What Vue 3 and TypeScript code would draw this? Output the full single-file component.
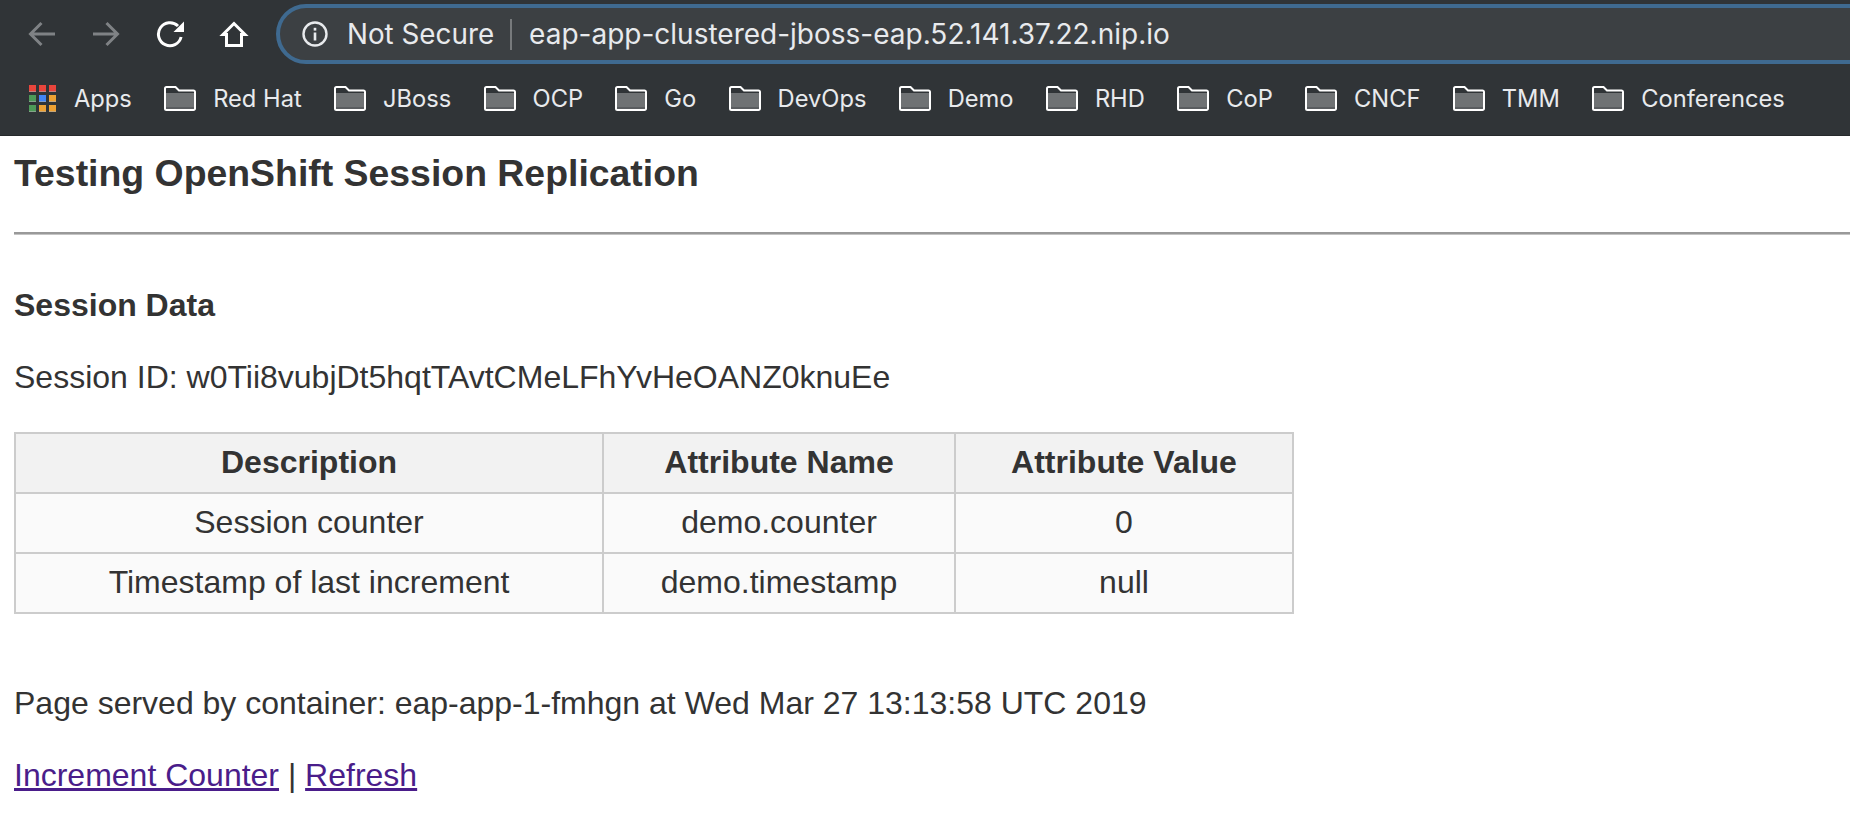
<script setup lang="ts">
const bookmarks: string[] = [
  "Red Hat",
  "JBoss",
  "OCP",
  "Go",
  "DevOps",
  "Demo",
  "RHD",
  "CoP",
  "CNCF",
  "TMM",
  "Conferences",
];

const appColors: string[] = [
  "#e8453c", "#e8453c", "#e8453c",
  "#4d9a58", "#4285f4", "#eda133",
  "#4d9a58", "#eda133", "#eda133",
];

const rows = [
  { description: "Session counter", name: "demo.counter", value: "0" },
  { description: "Timestamp of last increment", name: "demo.timestamp", value: "null" },
];
</script>

<template>
  <div class="page">
    <header class="chrome">
      <div class="toolbar">
        <button class="nav-btn" type="button" aria-label="Back">
          <svg width="30" height="26" viewBox="0 0 30 26" fill="none" stroke="#7f8285" stroke-width="3">
            <path d="M28 13H4M14.500 2 3.500 13 14.500 24" />
          </svg>
        </button>
        <button class="nav-btn" type="button" aria-label="Forward">
          <svg width="30" height="26" viewBox="0 0 30 26" fill="none" stroke="#7f8285" stroke-width="3">
            <path d="M2 13h24M15.500 2 26.500 13 15.500 24" />
          </svg>
        </button>
        <button class="nav-btn" type="button" aria-label="Reload">
          <svg width="30" height="28" viewBox="0 0 30 28" fill="none">
            <path d="M26.100 17A11.500 11.500 0 1 1 23 6" stroke="#fff" stroke-width="3" />
            <path d="M29 1.500V12H18.500Z" fill="#fff" />
          </svg>
        </button>
        <button class="nav-btn" type="button" aria-label="Home">
          <svg width="30" height="28" viewBox="0 0 30 28" fill="none" stroke="#fff" stroke-width="3">
            <path d="M15 3.500 4 14.500H7.500V25.500H22.500V14.500H26Z" />
          </svg>
        </button>
        <div class="omnibox">
          <svg class="info" width="28" height="28" viewBox="0 0 28 28" fill="none">
            <circle cx="14" cy="14" r="11.500" stroke="#e8eaed" stroke-width="2.400" />
            <rect x="12.700" y="12.500" width="2.600" height="8" fill="#e8eaed" />
            <rect x="12.700" y="7.800" width="2.600" height="2.800" fill="#e8eaed" />
          </svg>
          <span class="secure">Not Secure</span>
          <span class="divider"></span>
          <span class="url">eap-app-clustered-jboss-eap.52.141.37.22.nip.io</span>
        </div>
      </div>
      <nav class="bookmarks">
        <a class="bookmark apps">
          <span class="apps-grid">
            <i v-for="(color, i) in appColors" :key="i" :style="{ background: color }"></i>
          </span>
          Apps
        </a>
        <a v-for="label in bookmarks" :key="label" class="bookmark">
          <svg class="folder" width="32" height="25" viewBox="0 0 32 25">
            <path d="M2 7h28v14H2z" fill="#6f7274" />
            <path d="M2 21h28v3H2z" fill="#5a5d60" />
            <path
              d="M1 2.500A1.500 1.500 0 0 1 2.500 1H11.500L15 4.500H29.500A1.500 1.500 0 0 1 31 6V22.500A1.500 1.500 0 0 1 29.500 24H2.500A1.500 1.500 0 0 1 1 22.500Z"
              fill="none"
              stroke="#fff"
              stroke-width="2"
            />
          </svg>
          {{ label }}
        </a>
      </nav>
    </header>

    <main class="content">
      <h1>Testing OpenShift Session Replication</h1>
      <hr />
      <h2>Session Data</h2>
      <p class="session-id">Session ID: w0Tii8vubjDt5hqtTAvtCMeLFhYvHeOANZ0knuEe</p>
      <table>
        <thead>
          <tr>
            <th class="col-desc">Description</th>
            <th class="col-name">Attribute Name</th>
            <th class="col-value">Attribute Value</th>
          </tr>
        </thead>
        <tbody>
          <tr v-for="row in rows" :key="row.name">
            <td>{{ row.description }}</td>
            <td>{{ row.name }}</td>
            <td>{{ row.value }}</td>
          </tr>
        </tbody>
      </table>
      <p class="served">Page served by container: eap-app-1-fmhgn at Wed Mar 27 13:13:58 UTC 2019</p>
      <p class="links">
        <a href="#">Increment Counter</a> | <a href="#">Refresh</a>
      </p>
    </main>
  </div>
</template>

<style>
html,
body {
  margin: 0;
  background: #fff;
  overflow: hidden;
}
</style>

<style scoped>
.page {
  width: 1850px;
  height: 834px;
  overflow: hidden;
  font-family: "Liberation Sans", Arial, sans-serif;
  color: #333;
}

.chrome {
  height: 136px;
  background: #303437;
  box-sizing: border-box;
  border-bottom: 1px solid #26292b;
  font-family: Inter, "Noto Sans", sans-serif;
  color: #e8eaed;
}

.toolbar {
  display: flex;
  align-items: center;
  height: 78px;
  padding-left: 27px;
  padding-bottom: 10px;
  box-sizing: border-box;
}

.nav-btn {
  width: 30px;
  height: 30px;
  margin-right: 34px;
  padding: 0;
  border: 0;
  background: none;
  display: flex;
  align-items: center;
  justify-content: center;
}

.omnibox {
  flex: 0 0 1640px;
  margin-left: -7px;
  height: 60px;
  box-sizing: border-box;
  border: 4px solid #3f6a90;
  border-radius: 30px;
  background: #3c4043;
  display: flex;
  align-items: center;
  padding-left: 21px;
}

.secure {
  margin-left: 18px;
  font-size: 27.8px;
}

.divider {
  width: 2px;
  height: 31px;
  margin: 0 17px 0 16px;
  background: #777a7c;
}

.url {
  font-size: 28px;
}

.bookmarks {
  display: flex;
  align-items: center;
  padding-left: 29px;
  height: 40px;
}

.bookmark {
  display: flex;
  align-items: center;
  gap: 17px;
  font-size: 23.7px;
  margin-right: 32.3px;
}

.bookmark.apps {
  gap: 18px;
}

.apps-grid {
  display: grid;
  grid-template-columns: repeat(3, 7px);
  grid-auto-rows: 7px;
  gap: 3px;
}

.apps-grid i {
  display: block;
  box-shadow: inset 0 -1px rgba(170, 170, 170, 0.6);
}

.content {
  padding-left: 14px;
}

h1 {
  margin: 0;
  padding-top: 16px;
  font-size: 37.4px;
  line-height: 42px;
  font-weight: 700;
}

hr {
  margin: 38px 0 0;
  height: 3px;
  box-sizing: border-box;
  border: 0;
  border-bottom: 1px solid #c4c4c4;
  background: #999;
}

h2 {
  margin: 0;
  padding-top: 52px;
  font-size: 32px;
  line-height: 36px;
  font-weight: 700;
}

.session-id {
  margin: 36px 0 0;
  font-size: 32px;
  line-height: 36px;
}

table {
  margin-top: 37px;
  width: 1280px;
  table-layout: fixed;
  border-collapse: collapse;
  font-size: 32px;
  text-align: center;
}

th,
td {
  height: 56px;
  padding: 0 0 2px;
  border: 2px solid #ccc;
}

th {
  background: #f2f2f2;
  font-weight: 700;
}

td {
  background: #fafafa;
}

.col-desc {
  width: 586px;
}

.col-name {
  width: 350px;
}

.served {
  margin: 71px 0 0;
  font-size: 32px;
  line-height: 36px;
}

.links {
  margin: 36px 0 0;
  font-size: 32px;
  line-height: 36px;
}

.links a {
  color: #4a1d8a;
  text-decoration: underline;
}
</style>
